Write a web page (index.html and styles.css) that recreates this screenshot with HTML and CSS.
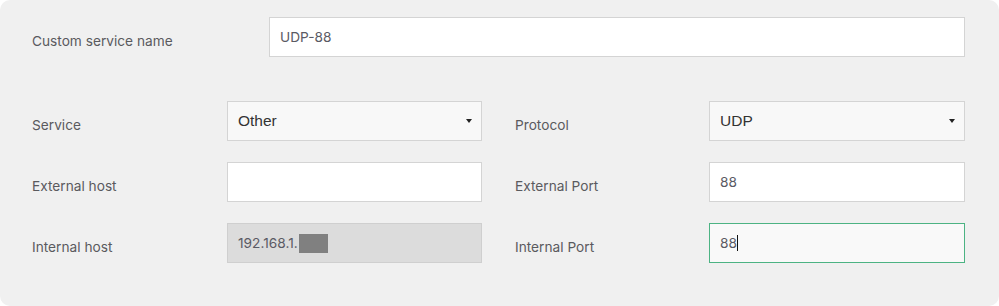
FILE: index.html
```html
<!DOCTYPE html>
<html>
<head>
<meta charset="utf-8">
<link rel="stylesheet" href="styles.css">
</head>
<body>
<div class="panel">
  <div class="name-row">
    <div class="lbl name-lbl">Custom service name</div>
    <div class="field text">UDP-88</div>
  </div>
  <div class="grid">
    <div class="lbl">Service</div>
    <div class="field select"><span>Other</span><span class="caret"></span></div>
    <div class="lbl right">Protocol</div>
    <div class="field select"><span>UDP</span><span class="caret"></span></div>

    <div class="lbl">External host</div>
    <div class="field text"></div>
    <div class="lbl right">External Port</div>
    <div class="field text">88</div>

    <div class="lbl">Internal host</div>
    <div class="field text disabled">192.168.1.<span class="redact"></span></div>
    <div class="lbl right">Internal Port</div>
    <div class="field text focused">88<span class="cursor"></span></div>
  </div>
</div>
</body>
</html>
```
FILE: styles.css
```css
html, body {
  margin: 0;
  padding: 0;
  background: #ffffff;
}
.panel {
  box-sizing: border-box;
  width: 999px;
  height: 306px;
  background: #f0f0f0;
  border-radius: 10px;
  padding: 17px 34px 0 32px;
  font-family: Inter, "Open Sans", sans-serif;
}
.name-row {
  display: flex;
  height: 40px;
}
.name-lbl {
  width: 237px;
  flex: none;
}
.name-row .field {
  flex: 1;
}
.lbl {
  font-size: 13.7px;
  color: #5a5a5e;
  align-self: center;
  padding-top: 8px;
}
.lbl.right {
  padding-left: 33px;
}
.grid {
  margin-top: 44px;
  display: grid;
  grid-template-columns: 195px 255px 227px 256px;
  grid-auto-rows: 40px;
  row-gap: 21px;
}
.field {
  box-sizing: border-box;
  height: 40px;
  border: 1px solid #d4d4d4;
  background: #ffffff;
  display: flex;
  align-items: center;
  padding: 0 10px;
  font-size: 13.7px;
  color: #5a5a64;
}
.field.select {
  background: #f8f8f8;
  font-family: "Liberation Sans", Arial, sans-serif;
  font-size: 15.5px;
  color: #333333;
  justify-content: space-between;
  padding: 0 9px 0 10px;
}
.caret {
  width: 0;
  height: 0;
  border-left: 3.5px solid transparent;
  border-right: 3.5px solid transparent;
  border-top: 4px solid #222222;
  margin-bottom: 1px;
}
.field.disabled {
  background: #dcdcdc;
  border-color: #cfcfcf;
}
.redact {
  display: inline-block;
  width: 29px;
  height: 19px;
  background: #808080;
  margin-left: 1px;
}
.field.focused {
  background: #f9f9f9;
  border-color: #4cb383;
}
.cursor {
  display: inline-block;
  width: 1px;
  height: 16px;
  background: #111111;
}
```
